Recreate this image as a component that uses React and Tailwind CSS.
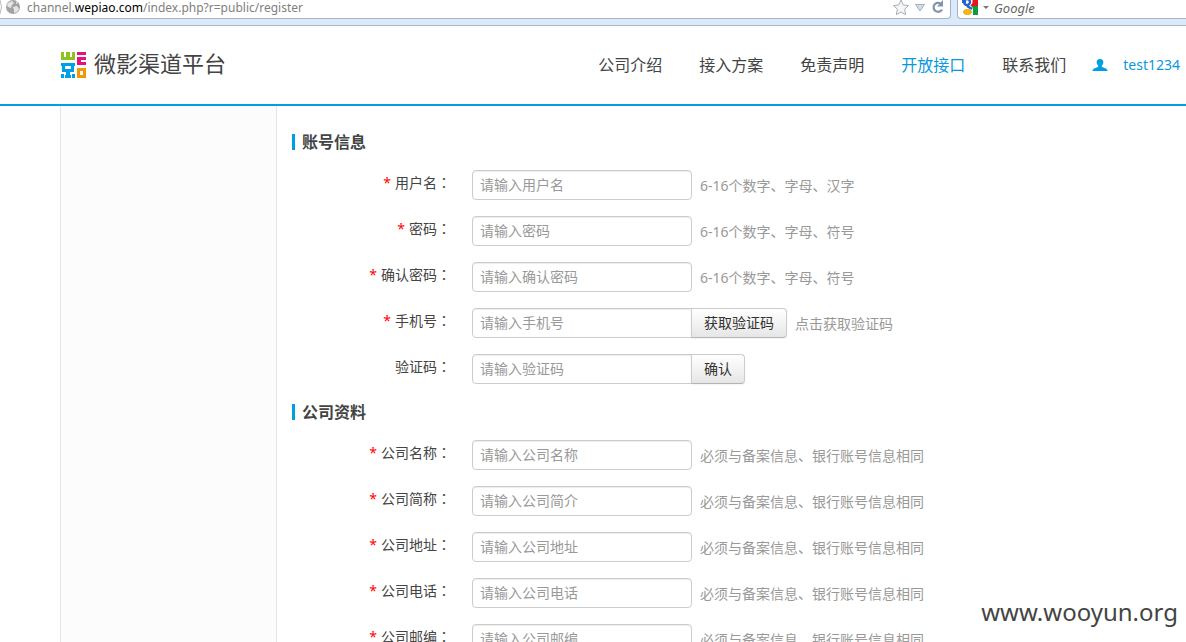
import { useState } from 'react';

const navItems = [
    { name: '公司介绍' },
    { name: '接入方案' },
    { name: '免责声明' },
    { name: '开放接口', active: true },
    { name: '联系我们' },
];

const accountFields = [
    { id: 'username', label: '用户名', placeholder: '请输入用户名', help: '6-16个数字、字母、汉字', required: true },
    { id: 'password', label: '密码', placeholder: '请输入密码', help: '6-16个数字、字母、符号', required: true, type: 'password' },
    { id: 'confirm', label: '确认密码', placeholder: '请输入确认密码', help: '6-16个数字、字母、符号', required: true, type: 'password' },
    { id: 'mobile', label: '手机号', placeholder: '请输入手机号', help: '点击获取验证码', required: true, button: '获取验证码' },
    { id: 'code', label: '验证码', placeholder: '请输入验证码', button: '确认' },
];

const companyHelp = '必须与备案信息、银行账号信息相同';

const companyFields = [
    { id: 'company', label: '公司名称', placeholder: '请输入公司名称', help: companyHelp, required: true },
    { id: 'short', label: '公司简称', placeholder: '请输入公司简介', help: companyHelp, required: true },
    { id: 'address', label: '公司地址', placeholder: '请输入公司地址', help: companyHelp, required: true },
    { id: 'tel', label: '公司电话', placeholder: '请输入公司电话', help: companyHelp, required: true },
    { id: 'zip', label: '公司邮编', placeholder: '请输入公司邮编', help: companyHelp, required: true },
];

function BrowserBar() {
    return (
        <div className="flex h-[26px] shrink-0 items-start gap-1.5 border-b border-[#a5b9cf] bg-[#dce9f8] font-['Noto_Sans',sans-serif] text-xs">
            <div className="flex h-[19px] min-w-0 flex-1 items-start rounded-br border-r border-b border-[#9fb4cc] bg-white pr-1">
                <svg className="h-[15px] w-[22px] shrink-0" viewBox="0 0 22 15">
                    <path d="M0 0q3 7 0 14" fill="none" stroke="#b5bdc6" />
                    <circle cx="13" cy="7" r="7" fill="#a3a3a3" />
                    <path d="M8 3l4-2 2 2-2 2-1 3-3-1-1-2zM13 7l4-1 2 3-2 3-3 1 0-3zM16 1l2 2-2 1z" fill="#e4e4e4" />
                </svg>
                <span className="ml-[5px] flex-1 text-xs leading-4 whitespace-nowrap text-[#808080]">
                    channel.<span className="text-black">wepiao.com</span>/index.php?r=public/register
                </span>
                <button type="button" aria-label="Bookmark" className="h-4 w-[18px]">
                    <svg viewBox="0 0 18 16" className="h-4 w-[18px]">
                        <path d="M9 0l2.300 5 5.200.6-3.900 3.600 1.100 5.500L9 12l-4.700 2.700 1.100-5.500L1.500 5.600l5.200-.6z" fill="#f6f6f6" stroke="#a9aeb5" />
                    </svg>
                </button>
                <button type="button" aria-label="History" className="ml-1 h-4 w-3">
                    <svg viewBox="0 0 12 16" className="h-4 w-3">
                        <path d="M1.500 4.500h9L6 11z" fill="#d4dbe5" stroke="#a3afbf" />
                    </svg>
                </button>
                <button type="button" aria-label="Reload" className="ml-1 h-4 w-4">
                    <svg viewBox="0 0 16 16" className="h-4 w-4">
                        <path d="M10.500 3.500A4.500 4.500 0 1 0 12 9.500" fill="none" stroke="#8395ad" strokeWidth="2.200" />
                        <path d="M13 0v6.500H7z" fill="#8395ad" />
                    </svg>
                </button>
            </div>
            <div className="flex h-[19px] w-[229px] items-start rounded-bl border-b border-l border-[#9fb4cc] bg-white">
                <svg className="ml-1 h-[15px] w-4 shrink-0" viewBox="0 0 16 15">
                    <path d="M8 0h8v6H8z" fill="#e5151b" />
                    <path d="M8 6h8v9H8z" fill="#109b3e" />
                    <path d="M0 0h4v3H0z" fill="#2c65c8" />
                    <path d="M8 0h2.500v3L8.500 5.500 11 8v7H8z" fill="#fff" />
                    <ellipse cx="5" cy="2" rx="3" ry="3" fill="none" stroke="#2361d1" strokeWidth="2.400" />
                    <path d="M5 6l5 3" stroke="#2361d1" strokeWidth="2.500" />
                    <ellipse cx="5.500" cy="12" rx="4" ry="2.500" fill="#f6b91d" stroke="#e8a50c" />
                </svg>
                <svg className="mx-1 h-4 w-2 shrink-0" viewBox="0 0 8 16">
                    <path d="M1 6h6L4 9z" fill="#777" />
                </svg>
                <input
                    aria-label="Google"
                    placeholder="Google"
                    className="h-4 w-full min-w-0 text-[13px] leading-4 italic outline-none placeholder:text-[#666]"
                />
            </div>
        </div>
    );
}

function Logo() {
    return (
        <svg className="h-[26px] w-[25px]" viewBox="0 0 25 26" aria-hidden="true">
            <path d="M0 0h3v5h2V0h4v5h2V0h3v8H0z" fill="#8fc31f" />
            <path d="M16 0h9v3h-9zM16 5h9v3h-5v2h5v3h-9z" fill="#e5127d" />
            <path d="M0 11h14v3h-1v6H9v3h1v3H4v-3h1v-3H1v-6H0zM0 22h3v4H0zM11 22h3v4h-3z" fill="#00a0e9" />
            <path d="M4 14h6v3H4z" fill="#fff" />
            <path d="M16 16h9v10h-9z" fill="#f39800" />
            <path d="M19 19h3v4h-3z" fill="#fff" />
        </svg>
    );
}

function Header() {
    return (
        <header className="flex h-20 shrink-0 items-center justify-between border-b-2 border-[#009fe3] pr-1.5 pl-[61px]">
            <a href="#" className="flex items-center gap-2">
                <Logo />
                <span className="pb-1 text-[22px] leading-7">微影渠道平台</span>
            </a>
            <nav className="flex items-center text-base leading-6">
                <div className="flex gap-[37px]">
                    {navItems.map((item) => (
                        <a key={item.name} href="#" className={item.active ? 'text-[#0a98dc]' : ''}>
                            {item.name}
                        </a>
                    ))}
                </div>
                <a href="#" className="ml-[26px] flex items-center gap-[15px] text-[#0a98dc]">
                    <svg className="h-3 w-4" viewBox="0 0 16 12" aria-hidden="true">
                        <path d="M8 0c2.400 0 3.500 1.600 3.300 3.600-.1 1.400-.8 2.400-1.500 3.100v1.100c1.200.8 3.300 1.100 4.500 1.900.8.500 1.100 1.300 1.200 2.300H.5c.1-1 .4-1.800 1.200-2.300C2.900 8.900 5 8.600 6.200 7.800V6.700C5.500 6 4.800 5 4.700 3.600 4.500 1.600 5.600 0 8 0z" fill="#009fe3" />
                    </svg>
                    <span className="text-sm leading-6">test1234</span>
                </a>
            </nav>
        </header>
    );
}

function SectionTitle({ children }) {
    return (
        <h2 className="mb-4 flex h-6 items-center gap-[7px] text-base leading-6 font-bold">
            <span className="h-4 w-[3px] bg-[#009fe3]" />
            {children}
        </h2>
    );
}

function Field({ field }) {
    const [value, setValue] = useState('');

    return (
        <div className="mb-4 flex h-[30px] items-start">
            <label htmlFor={field.id} className="mr-[21px] w-[159px] shrink-0 pt-0.5 text-right leading-5">
                {field.required && <span className="mr-1 text-[#ff0000]">*</span>}
                {field.label}
                <span className="font-['Noto_Sans_CJK_TC',sans-serif]">：</span>
            </label>
            <input
                id={field.id}
                type={field.type || 'text'}
                value={value}
                onChange={(e) => setValue(e.target.value)}
                placeholder={field.placeholder}
                className={`h-[30px] w-[220px] border border-[#ccc] bg-white px-[7px] pb-0.5 leading-5 shadow-[inset_0_1px_1px_rgba(0,0,0,0.075)] outline-none placeholder:text-[#999] ${field.button ? 'rounded-l' : 'rounded'}`}
            />
            {field.button && (
                <button
                    type="button"
                    className="-ml-px h-[30px] rounded-r border border-[#ccc] border-b-[#b3b3b3] bg-linear-to-b from-white to-[#e6e6e6] px-3 leading-5 text-[#333] shadow-[0_1px_2px_rgba(0,0,0,0.05)]"
                >
                    {field.button}
                </button>
            )}
            {field.help && <span className="ml-2 pt-1.5 leading-5 text-[#999]">{field.help}</span>}
        </div>
    );
}

export default function App() {
    return (
        <div className="relative flex h-screen flex-col overflow-hidden bg-white font-['Noto_Sans','Noto_Sans_CJK_SC',sans-serif] text-sm text-[#444]">
            <BrowserBar />
            <Header />

            <div className="flex min-h-0 flex-1 pl-[60px]">
                <aside className="w-[217px] shrink-0 border-x border-[#e5e5e5] bg-[#fcfcfc]" />
                <main className="flex-1 overflow-hidden pt-6 pl-[15px]">
                    <form>
                        <SectionTitle>账号信息</SectionTitle>
                        {accountFields.map((field) => (
                            <Field key={field.id} field={field} />
                        ))}

                        <SectionTitle>公司资料</SectionTitle>
                        {companyFields.map((field) => (
                            <Field key={field.id} field={field} />
                        ))}
                    </form>
                </main>
            </div>

            {/* Watermark */}
            <div className="absolute right-2 bottom-3 text-2xl leading-9">www.wooyun.org</div>
        </div>
    );
}
